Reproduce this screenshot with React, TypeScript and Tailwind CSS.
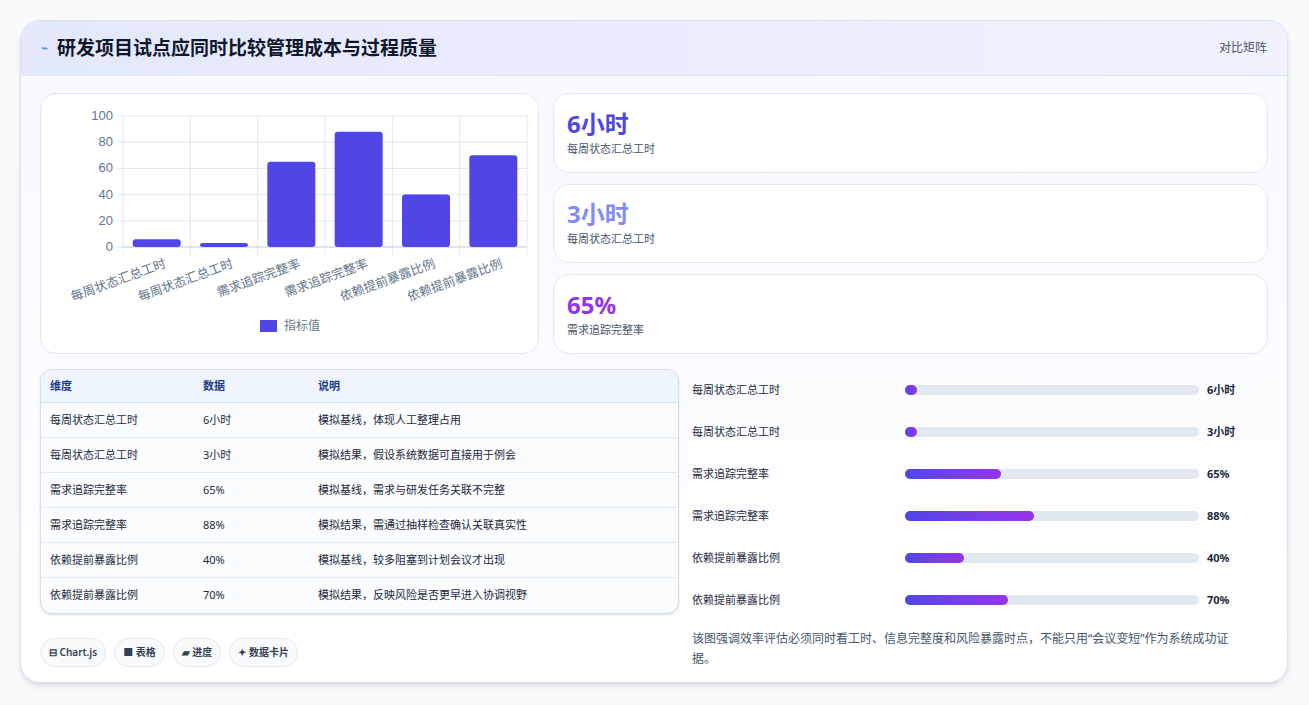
import React from "react";

const F = { fontFamily: '"Noto Sans", "Noto Sans CJK SC", sans-serif' };
const data = [
  { k: "每周状态汇总工时", v: "6小时", n: 6, d: "模拟基线，体现人工整理占用" },
  { k: "每周状态汇总工时", v: "3小时", n: 3, d: "模拟结果，假设系统数据可直接用于例会" },
  { k: "需求追踪完整率", v: "65%", n: 65, d: "模拟基线，需求与研发任务关联不完整" },
  { k: "需求追踪完整率", v: "88%", n: 88, d: "模拟结果，需通过抽样检查确认关联真实性" },
  { k: "依赖提前暴露比例", v: "40%", n: 40, d: "模拟基线，较多阻塞到计划会议才出现" },
  { k: "依赖提前暴露比例", v: "70%", n: 70, d: "模拟结果，反映风险是否更早进入协调视野" },
];

function Chart() {
  const x0 = 82, x1 = 486, y0 = 153, y1 = 22;
  const cw = (x1 - x0) / 6;
  return (
    <svg width="498" height="258" viewBox="0 0 498 258">
      {[0, 20, 40, 60, 80, 100].map((t) => {
        const y = y0 - ((y0 - y1) * t) / 100;
        return (
          <g key={t}>
            <line x1={x0 - 6} x2={x1} y1={y} y2={y} stroke="#e2e8f0" />
            <text x={x0 - 10} y={y + 4} textAnchor="end" fontSize="13" fill="#64748b" fontFamily="Liberation Sans, sans-serif">{t}</text>
          </g>
        );
      })}
      {Array.from({ length: 7 }).map((_, i) => (
        <line key={i} x1={x0 + i * cw} x2={x0 + i * cw} y1={y1} y2={y0 + 8} stroke="#e2e8f0" />
      ))}
      <line x1={x0} x2={x1} y1={y0} y2={y0} stroke="#cbd5e1" />
      {data.map((d, i) => {
        const h = ((y0 - y1) * d.n) / 100;
        const cx = x0 + i * cw + cw / 2;
        return (
          <g key={i}>
            <rect x={cx - 24} y={y0 - h} width={48} height={h} rx={3} fill="#4f46e5" />
            <text x={cx + 10} y={y0 + 20} textAnchor="end" fontSize="12.5" fill="#64748b" transform={`rotate(-20 ${cx + 10} ${y0 + 20})`} style={F}>{d.k}</text>
          </g>
        );
      })}
      <rect x={219} y={226} width={17} height={12} fill="#4f46e5" />
      <text x={243} y={236} fontSize="12" fill="#64748b" style={F}>指标值</text>
    </svg>
  );
}

function Stat({ v, l, c }: { v: string; l: string; c: string }) {
  return (
    <div className="flex-1 rounded-2xl border border-[#e2e8f0] bg-white px-[13px] flex flex-col justify-center">
      <div className={`text-[24px] font-bold leading-[30px] ${c}`}>{v}</div>
      <div className="text-[11px] text-[#475569] mt-[2px]">{l}</div>
    </div>
  );
}

export default function App() {
  return (
    <div className="w-[1309px] h-[705px] bg-[#f8fafc] pt-[20px] px-[20px]" style={F}>
      <div className="w-[1268px] h-[663px] rounded-[20px] border border-[#dbe1f1] bg-gradient-to-b from-[#f7f8fe] to-white shadow-md overflow-hidden">
        <div className="h-[55px] bg-gradient-to-r from-[#e4e8fd] to-[#f1f2fe] border-b border-[#e2e8f0] flex items-center justify-between pl-[20px] pr-[20px]">
          <div className="flex items-center gap-[9px]">
            <span className="text-[#3b82f6] text-[12px]">⌁</span>
            <span className="text-[19px] font-bold text-[#0f172a]">研发项目试点应同时比较管理成本与过程质量</span>
          </div>
          <span className="text-[12px] text-[#475569]">对比矩阵</span>
        </div>
        <div className="px-[19px] pt-[17px]">
          <div className="flex gap-[14px] h-[261px]">
            <div className="w-[499px] rounded-2xl border border-[#e2e8f0] bg-white">
              <Chart />
            </div>
            <div className="flex-1 flex flex-col gap-[11px]">
              <Stat v="6小时" l="每周状态汇总工时" c="text-[#4f46e5]" />
              <Stat v="3小时" l="每周状态汇总工时" c="text-[#818cf8]" />
              <Stat v="65%" l="需求追踪完整率" c="text-[#9333ea]" />
            </div>
          </div>
          <div className="flex gap-[13px] mt-[15px]">
            <div className="w-[639px]">
              <div className="rounded-xl border border-[#d6deea] overflow-hidden bg-[#fafcfe] shadow-sm">
                <div className="flex h-[33px] items-center bg-[#eff5fe] border-b border-[#d6deea] text-[11px] font-semibold text-[#1e3a8a] px-[9px]">
                  <div className="w-[153px]">维度</div><div className="w-[115px]">数据</div><div>说明</div>
                </div>
                {data.map((d, i) => (
                  <div key={i} className={`flex h-[35px] items-center text-[11px] text-[#1e293b] px-[9px] ${i < 5 ? "border-b border-[#e5eaf1]" : ""}`}>
                    <div className="w-[153px]">{d.k}</div><div className="w-[115px]">{d.v}</div><div>{d.d}</div>
                  </div>
                ))}
              </div>
              <div className="flex gap-[8px] mt-[24px]">
                {["⊟ Chart.js", "■ 表格", "▰ 进度", "✦ 数据卡片"].map((t) => (
                  <span key={t} className="h-[29px] px-[8px] rounded-full border border-[#e2e8f0] bg-[#f8fafc] text-[10px] font-semibold text-[#334155] flex items-center">{t}</span>
                ))}
              </div>
            </div>
            <div className="flex-1 pr-[19px]">
              {data.map((d, i) => (
                <div key={i} className="flex items-center h-[42px] text-[11px]">
                  <div className="w-[213px] text-[#1e293b]">{d.k}</div>
                  <div className="w-[294px] h-[10px] rounded-full bg-[#e2e8f0]">
                    <div className="h-full rounded-full bg-gradient-to-r from-[#4f46e5] to-[#9333ea]" style={{ width: `${Math.max(d.n / 2, 4)}%` }} />
                  </div>
                  <div className="ml-[8px] font-bold text-[#1e293b]">{d.v}</div>
                </div>
              ))}
              <p className="text-[12px] leading-[20px] text-[#475569] mt-[8px]">该图强调效率评估必须同时看工时、信息完整度和风险暴露时点，不能只用“会议变短”作为系统成功证据。</p>
            </div>
          </div>
        </div>
      </div>
    </div>
  );
}
